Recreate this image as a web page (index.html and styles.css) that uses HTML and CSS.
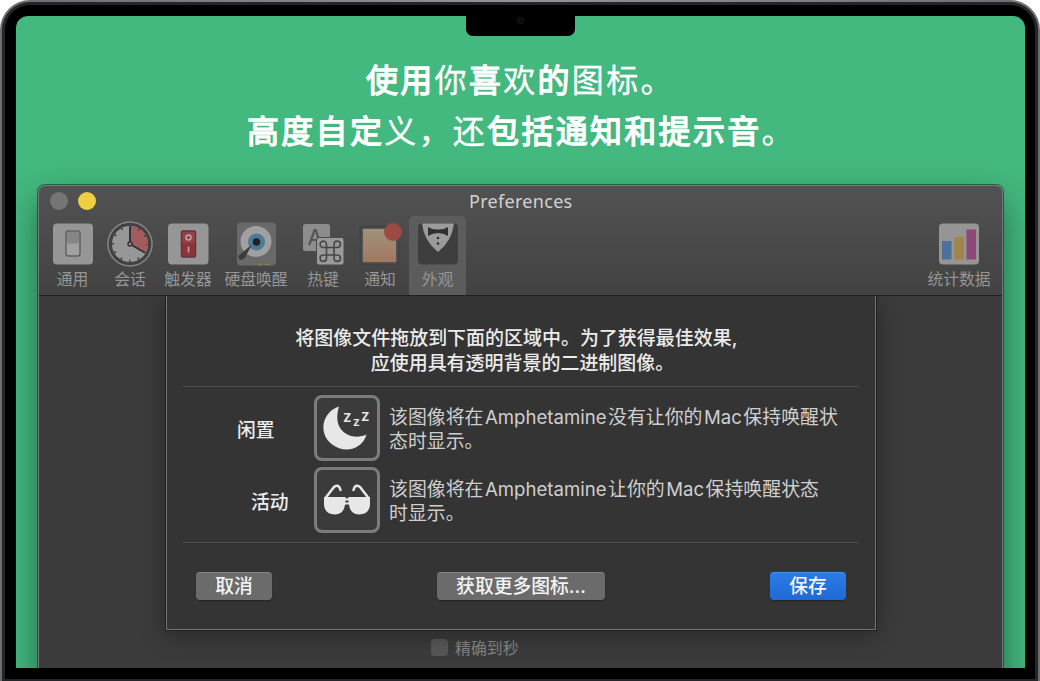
FILE: index.html
```html
<!DOCTYPE html>
<html lang="zh-CN">
<head>
    <meta charset="UTF-8">
    <meta name="viewport" content="width=device-width, initial-scale=1.0">
    <title>Preferences</title>
    <link rel="stylesheet" href="styles.css">
</head>
<body>
    <div class="laptop">
        <div class="bezel">
            <div class="notch"><span class="camera"></span></div>
            <div class="screen">
                <h1 class="headline">
                    <span>使用<i>你</i>喜<i>欢</i>的<i>图标。</i></span>
                    <span>高度自定<i>义，还</i>包括通知和提示音<i>。</i></span>
                </h1>

                <div class="window">
                    <div class="titlebar">
                        <span class="dot dot-grey"></span>
                        <span class="dot dot-yellow"></span>
                        <span class="title">Preferences</span>
                    </div>

                    <div class="toolbar">
                        <div class="tool general">
                            <svg width="46" height="46" viewBox="0 0 46 46">
                                <rect x="3" y="2.5" width="40" height="41" rx="4" fill="#969696"/>
                                <rect x="16" y="10" width="14" height="25" rx="2.5" fill="#a1a1a1" stroke="#606060" stroke-width="1.5"/>
                                <rect x="17" y="11" width="12" height="11.5" rx="1.5" fill="#858585"/>
                            </svg>
                            <span>通用</span>
                        </div>
                        <div class="tool">
                            <svg width="46" height="46" viewBox="0 0 46 46">
                                <circle cx="23" cy="23" r="22" fill="#424242" stroke="#858585" stroke-width="1.5"/>
                                <circle cx="23" cy="23" r="18" fill="#979797"/>
                                <path d="M23 23V5A18 18 0 0 1 38.6 32Z" fill="#a45b5f"/>
                                <circle cx="23" cy="23" r="17" fill="none" stroke="#424242" stroke-width="2.5" stroke-dasharray="1.5 7.401" stroke-dashoffset=".75"/>
                                <path d="M23 5.5V23L37.5 31.5" fill="none" stroke="#343434" stroke-width="2"/>
                                <circle cx="23" cy="23" r="2" fill="#979797" stroke="#343434" stroke-width="1.5"/>
                            </svg>
                            <span>会话</span>
                        </div>
                        <div class="tool">
                            <svg width="46" height="46" viewBox="0 0 46 46">
                                <rect x="3" y="2.5" width="40.5" height="41" rx="4" fill="#969696"/>
                                <rect x="16.5" y="10" width="14" height="26" rx="1.5" fill="#954147" stroke="#623338" stroke-width="1.5"/>
                                <path d="M17 22h13v13H17Z" fill="#8a343a"/>
                                <circle cx="23.5" cy="16.5" r="2.5" fill="none" stroke="#b9a9aa" stroke-width="1.5"/>
                                <path d="M23.5 25.5v6" stroke="#b9a9aa" stroke-width="1.6"/>
                            </svg>
                            <span>触发器</span>
                        </div>
                        <div class="tool disk">
                            <svg width="46" height="46" viewBox="0 0 46 46">
                                <rect x="4" y="1.5" width="39" height="43" rx="4" fill="#696969"/>
                                <circle cx="23" cy="20.5" r="15.5" fill="#a0a0a0"/>
                                <circle cx="23.5" cy="21" r="8.5" fill="#4f7a96"/>
                                <circle cx="23.5" cy="21" r="3.7" fill="#202020"/>
                                <path d="M19 23.5L5.8 34.5Q4.5 38.5 8.8 39L11.8 37Z" fill="#3c3c3c"/>
                                <path d="M25 43.5h4M31.5 43.5h5" stroke="#8b7d3a" stroke-width="1.5"/>
                            </svg>
                            <span>硬盘唤醒</span>
                        </div>
                        <div class="tool hotkey">
                            <svg width="46" height="46" viewBox="0 0 46 46">
                                <rect x="3" y="3" width="27" height="27" rx="2.5" fill="#8d8d8d"/>
                                <text x="7.5" y="23.5" class="key-letter">A</text>
                                <rect x="16.5" y="16.5" width="27.5" height="27.5" rx="2.5" fill="#999" stroke="#4a4a4a"/>
                                <path d="M26.5 26.5h7.5v7.5h-7.5ZM26.5 26.5h-2.8a3.2 3.2 0 1 1 2.8-3.2ZM34 26.5v-3.2a3.2 3.2 0 1 1 3.2 3.2ZM34 34h3.2a3.2 3.2 0 1 1-3.2 3.2ZM26.5 34v3.2a3.2 3.2 0 1 1-3.2-3.2Z" fill="none" stroke="#474747" stroke-width="1.6"/>
                            </svg>
                            <span>热键</span>
                        </div>
                        <div class="tool notice">
                            <svg width="46" height="46" viewBox="0 0 46 46">
                                <defs>
                                    <linearGradient id="note" x2="0" y2="1">
                                        <stop offset="0" stop-color="#9e927c"/>
                                        <stop offset="1" stop-color="#a27860"/>
                                    </linearGradient>
                                </defs>
                                <rect x="3.5" y="5.5" width="38" height="38" rx="3" fill="#535353" stroke="#424242" stroke-width="2"/>
                                <rect x="6" y="8" width="33" height="33" fill="url(#note)"/>
                                <circle cx="36" cy="11" r="9" fill="#9b4b44"/>
                            </svg>
                            <span>通知</span>
                        </div>
                        <div class="tool selected">
                            <svg width="46" height="46" viewBox="0 0 46 46">
                                <rect x="3" y="2.5" width="40" height="41" rx="4" fill="#3e3e3e"/>
                                <path d="M7 2.5H39Q37 20 23 31Q9 20 7 2.5Z" fill="#9b9b9b"/>
                                <path d="M13 6Q18 9 23 8.5Q28 9 33 6V15Q28 12 23 12Q18 12 13 15Z" fill="#303030"/>
                                <circle cx="23" cy="17" r="1.3" fill="#303030"/>
                                <circle cx="23" cy="22.5" r="1.3" fill="#303030"/>
                            </svg>
                            <span>外观</span>
                        </div>
                        <div class="tool stats">
                            <svg width="46" height="46" viewBox="0 0 46 46">
                                <rect x="3" y="2.5" width="40" height="41" rx="4" fill="#959595"/>
                                <path d="M6 20h9.5v18.5H6Z" fill="#4b7099"/>
                                <path d="M18.3 16h9.5v22.5h-9.5Z" fill="#a08448"/>
                                <path d="M30.5 8.5H40v30h-9.5Z" fill="#8c4877"/>
                            </svg>
                            <span>统计数据</span>
                        </div>
                    </div>

                    <div class="content">
                        <div class="sheet">
                            <p class="intro">将图像文件拖放到下面的区域中。为了获得最佳效果<b>,</b><br>应使用具有透明背景的二进制图像。</p>

                            <div class="rows">
                                <div class="row idle">
                                    <span class="label">闲置</span>
                                    <div class="well">
                                        <svg width="60" height="60" viewBox="0 0 60 60">
                                            <path d="M22 8.5C5 14 1 35 14.5 46C28 56.5 45 51.5 49.5 36.5C36 43 14 35 22 8.5Z" fill="#e7e7e7"/>
                                            <g class="zzz">
                                                <text x="26" y="23.5">z</text>
                                                <text x="36" y="28" class="small">z</text>
                                                <text x="44" y="23">z</text>
                                            </g>
                                        </svg>
                                    </div>
                                    <p class="desc">该图像将在<em>Amphetamine</em>没有让你的<em>Mac</em>保持唤醒状<br>态时显示。</p>
                                </div>
                                <div class="row active">
                                    <span class="label">活动</span>
                                    <div class="well">
                                        <svg width="60" height="60" viewBox="0 0 60 60">
                                            <path d="M8.5 28L17 17Q22 13.5 23.5 20M51.5 28L43 17Q38 13.5 36.5 20" fill="none" stroke="#e7e7e7" stroke-width="2.5" stroke-linecap="round"/>
                                            <path d="M7 27H53V35Q52 44.5 42 44.5Q33 44 32 34.5H28Q27 44 18 44.5Q8 44.5 7 35Z" fill="#e7e7e7"/>
                                            <path d="M28.5 27h3v1.2h-3ZM28.5 30.5h3v2h-3Z" fill="#3a3a3a"/>
                                        </svg>
                                    </div>
                                    <p class="desc">该图像将在<em>Amphetamine</em>让你的<em>Mac</em>保持唤醒状态<br>时显示。</p>
                                </div>
                            </div>

                            <div class="buttons">
                                <button class="btn">取消</button>
                                <button class="btn btn-more">获取更多图标...</button>
                                <button class="btn btn-save">保存</button>
                            </div>
                        </div>

                        <div class="seconds">
                            <span class="checkbox"></span>
                            <span>精确到秒</span>
                        </div>
                    </div>
                </div>
            </div>
        </div>
    </div>
</body>
</html>
```

FILE: styles.css
```css
* {
    margin: 0;
    padding: 0;
    box-sizing: border-box;
}

body {
    background: #fff;
    font-family: Inter, 'Noto Sans CJK SC', sans-serif;
    height: 681px;
    overflow: hidden;
}

/* laptop frame */
.laptop {
    height: 681px;
    padding: 2px 2px 0;
    background: linear-gradient(90deg, #6c6d70, #929396 50%, #6c6d70);
    border-radius: 30px 30px 0 0;
}

.bezel {
    position: relative;
    height: 679px;
    padding: 11px 10px 9px 11px;
    background: #000;
    border: 3px solid #242528;
    border-bottom-width: 2px;
    border-radius: 28px 28px 0 0;
}

.notch {
    position: absolute;
    z-index: 2;
    top: 8px;
    left: 461px;
    width: 109px;
    height: 23px;
    background: #000;
    border-radius: 0 0 7px 7px;
}

.camera {
    position: absolute;
    top: 4px;
    left: 51px;
    width: 7px;
    height: 7px;
    border: 1px solid #1b1b22;
    border-radius: 50%;
    background: #08080c;
}

.screen {
    height: 652px;
    overflow: hidden;
    background: #43b87f;
    border-radius: 12px 12px 0 0;
}

.headline {
    height: 169px;
    padding-top: 37px;
    color: #fff;
    font-family: 'Noto Sans CJK SC', sans-serif;
    font-size: 32px;
    font-weight: 400;
    line-height: 51px;
    letter-spacing: 2.3px;
    -webkit-text-stroke: 1.3px #fff;
    stroke-linejoin: round;
}

.headline span {
    display: block;
    padding-left: 350px;
    white-space: nowrap;
}

.headline span + span {
    padding-left: 231px;
}

.headline i {
    font-style: normal;
    font-weight: 400;
    -webkit-text-stroke: 0.3px #fff;
}

/* preferences window */
.window {
    height: 520px;
    margin: 0 22px;
    border: 1px solid #777;
    border-bottom: 0;
    border-radius: 7px 7px 0 0;
    box-shadow: 0 0 0 1px rgba(10, 50, 30, 0.6), 0 16px 34px rgba(0, 30, 15, 0.5);
    background: linear-gradient(#525252, #424242 110px, #3b3b3b 110px);
}

.titlebar {
    display: flex;
    align-items: center;
    height: 30px;
    padding-left: 11px;
}

.dot {
    width: 18px;
    height: 18px;
    margin-right: 10px;
    border-radius: 50%;
}

.dot-grey {
    background: #757575;
}

.dot-yellow {
    background: #efcf42;
}

.title {
    margin-left: 363px;
    color: #d2d2d2;
    font-family: 'Noto Sans', sans-serif;
    font-size: 18px;
    letter-spacing: 0.3px;
}

.toolbar {
    display: flex;
    height: 80px;
    padding-left: 5px;
    border-bottom: 1px solid #202020;
}

.tool {
    display: flex;
    flex-direction: column;
    align-items: center;
    width: 58px;
    padding-top: 5px;
    color: #969696;
    font-size: 15.8px;
    line-height: 24px;
    white-space: nowrap;
}

.tool svg {
    flex: none;
    margin-bottom: 1px;
}

.general {
    width: 57px;
}

.disk {
    width: 78px;
}

.hotkey {
    width: 56px;
}

.selected {
    width: 57px;
    background: #5c5c5c;
    border-radius: 5px 5px 0 0;
}

.stats {
    margin-left: auto;
    margin-right: 14px;
}

.key-letter {
    font-size: 22px;
    font-family: Inter, sans-serif;
    fill: #505050;
}

.content {
    padding-left: 127px;
}

.sheet {
    width: 710px;
    height: 334px;
    padding: 31px 16px 0;
    background: #343434;
    border: 1px solid #747474;
    border-top: 0;
    box-shadow: 0 0 0 1px #202020, 0 5px 22px rgba(0, 0, 0, 0.35);
    clip-path: inset(0 -30px -35px);
}

.intro {
    height: 59px;
    padding-left: 3px;
    color: #ececec;
    font-size: 18.98px;
    font-weight: 500;
    line-height: 24.5px;
    text-align: center;
}

.intro b {
    display: inline-block;
    width: 18px;
    font-weight: 500;
    text-align: left;
}

.rows {
    height: 157px;
    padding-top: 8px;
    border-top: 1px solid #4e4e4e;
    border-bottom: 1px solid #4e4e4e;
}

.row {
    display: flex;
    align-items: center;
    height: 66px;
    margin-bottom: 6px;
    padding-left: 54px;
}

.row.active {
    padding-left: 68px;
}

.label {
    width: 77px;
    color: #ececec;
    font-size: 18.8px;
    font-weight: 500;
}

.active .label {
    width: 63px;
}

.well {
    width: 66px;
    height: 66px;
    margin-right: 9px;
    background: #3b3b3b;
    border: 3px solid #7c7c7c;
    border-radius: 8px;
}

.well svg {
    display: block;
}

.zzz text {
    font-family: Inter, sans-serif;
    font-size: 15px;
    font-weight: 600;
    fill: #e7e7e7;
}

.zzz .small {
    font-size: 12px;
}

.desc {
    margin-top: 3px;
    color: #cfcfcf;
    font-size: 18.9px;
    line-height: 24.5px;
    white-space: nowrap;
}

.desc em {
    margin: 0 1.5px;
    font-size: 18.6px;
    font-style: normal;
}

.buttons {
    display: flex;
    justify-content: space-between;
    padding: 29px 13px 0;
}

.btn {
    width: 76px;
    height: 28px;
    border: 0;
    border-top: 1px solid #858585;
    border-radius: 4px;
    background: #6b6b6b;
    box-shadow: 0 1px 1px #252525;
    color: #f4f4f4;
    font-family: inherit;
    font-size: 18.8px;
    font-weight: 500;
    line-height: 27px;
}

.btn-more {
    width: 168px;
}

.btn-save {
    border-top-color: #438ff0;
    background: linear-gradient(#2b7be6, #1f69d5);
}

.seconds {
    display: flex;
    align-items: center;
    height: 26px;
    margin: 4px 0 0 265px;
    color: #858585;
    font-size: 15.9px;
}

.checkbox {
    width: 17px;
    height: 17px;
    margin-right: 7px;
    background: #575757;
    border-radius: 4px;
}
```
